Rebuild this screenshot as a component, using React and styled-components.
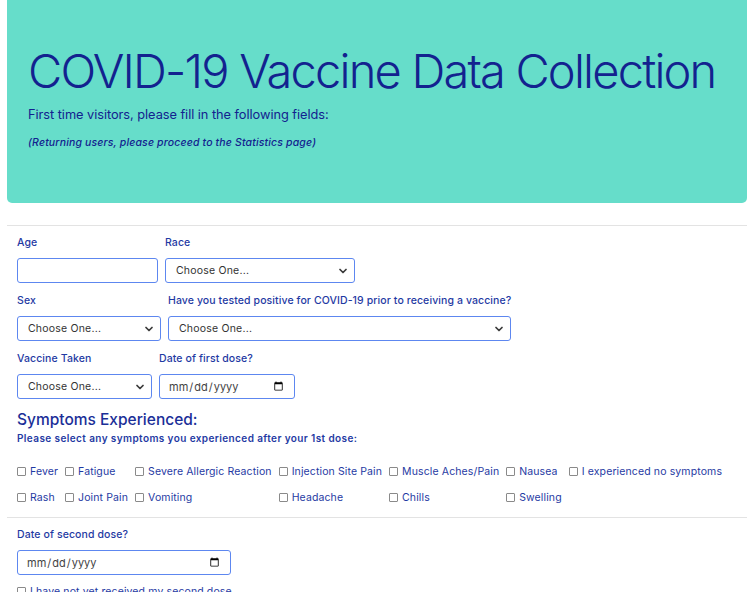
import styled, { createGlobalStyle } from "styled-components";
import { ChevronDown } from "lucide-react";

const GlobalStyle = createGlobalStyle`
  body {
    margin: 0;
    background: #fff;
    font-family: Inter, "Noto Sans", sans-serif;
  }
`;

const symptoms = [
  ["Fever", "Fatigue", "Severe Allergic Reaction", "Injection Site Pain", "Muscle Aches/Pain", "Nausea", "I experienced no symptoms"],
  ["Rash", "Joint Pain", "Vomiting", "Headache", "Chills", "Swelling", null],
];

function Select({ width, options = ["Choose One..."] }) {
  return (
    <SelectWrap $width={width}>
      <SelectBox>
        {options.map((o) => (
          <option key={o}>{o}</option>
        ))}
      </SelectBox>
      <Chevron>
        <ChevronDown size={12} strokeWidth={3.5} color="#3a3a3a" />
      </Chevron>
    </SelectWrap>
  );
}

function App() {
  return (
    <Page>
      <GlobalStyle />
      <Hero>
        <Title>COVID-19 Vaccine Data Collection</Title>
        <Lead>First time visitors, please fill in the following fields:</Lead>
        <Note>(Returning users, please proceed to the Statistics page)</Note>
      </Hero>
      <Rule $top={22} />
      <Form>
        <Row>
          <Field>
            <Label>Age</Label>
            <TextInput $width={141} type="text" />
          </Field>
          <Field>
            <Label>Race</Label>
            <Select width={190} />
          </Field>
        </Row>
        <Row>
          <Field>
            <Label>Sex</Label>
            <Select width={144} />
          </Field>
          <Field>
            <Label>Have you tested positive for COVID-19 prior to receiving a vaccine?</Label>
            <Select width={343} />
          </Field>
        </Row>
        <Row>
          <Field>
            <Label>Vaccine Taken</Label>
            <Select width={135} />
          </Field>
          <Field>
            <Label>Date of first dose?</Label>
            <DateInput $width={136} type="date" />
          </Field>
        </Row>
        <SectionTitle>Symptoms Experienced:</SectionTitle>
        <SectionHint>Please select any symptoms you experienced after your 1st dose:</SectionHint>
        <SymptomGrid>
          {symptoms.flat().map((s, i) =>
            s ? (
              <Check key={s}>
                <Box type="checkbox" />
                {s}
              </Check>
            ) : (
              <span key={"e" + i} />
            )
          )}
        </SymptomGrid>
      </Form>
      <Rule $top={12} />
      <Form>
        <Field>
          <Label>Date of second dose?</Label>
          <DateInput $width={214} type="date" />
        </Field>
        <SecondCheck>
          <Box type="checkbox" />
          I have not yet received my second dose
        </SecondCheck>
      </Form>
    </Page>
  );
}

const Page = styled.main`
  padding: 0 8px 0 7px;
  height: 592px;
  overflow: hidden;
`;

const Hero = styled.header`
  background: #66ddca;
  border-radius: 0 0 5px 5px;
  height: 203px;
  box-sizing: border-box;
  padding: 43px 21px 0;
  color: #13228f;
`;

const Title = styled.h1`
  margin: 0;
  font-size: 47px;
  font-weight: 300;
  letter-spacing: -1.8px;
  line-height: 56px;
  white-space: nowrap;
`;

const Lead = styled.p`
  margin: 7px 0 0;
  font-size: 12.8px;
  font-weight: 400;
  line-height: 17px;
  letter-spacing: -0.05px;
`;

const Note = styled.p`
  margin: 13px 0 0;
  font-size: 10.5px;
  font-style: italic;
  font-weight: 500;
  line-height: 14px;
  letter-spacing: 0.15px;
`;

const Rule = styled.hr`
  margin: ${(p) => p.$top}px 0 0;
  border: 0;
  border-top: 1px solid #e3e3e3;
`;

const Form = styled.section`
  padding: 10px 10px 0;
`;

const Row = styled.div`
  display: flex;
  gap: 7px;
  margin-bottom: 11px;
`;

const Field = styled.div`
  display: flex;
  flex-direction: column;
  align-items: flex-start;
`;

const Label = styled.label`
  font-size: 10.5px;
  font-weight: 500;
  color: #1f3aa3;
  line-height: 14px;
  margin-bottom: 8px;
  letter-spacing: 0.1px;
`;

const controlBase = `
  box-sizing: border-box;
  height: 25px;
  border: 1px solid #5d87f0;
  border-radius: 3px;
  background: #fff;
  font-family: Inter, "Noto Sans", sans-serif;
  font-size: 10.5px;
  color: #333;
  outline: none;
`;

const TextInput = styled.input`
  ${controlBase}
  width: ${(p) => p.$width}px;
  padding: 0 8px;
`;

const DateInput = styled.input`
  ${controlBase}
  width: ${(p) => p.$width}px;
  padding: 0 8px;
  font-size: 11px;
  letter-spacing: 0;
  color: #444;
`;

const SelectWrap = styled.div`
  position: relative;
  width: ${(p) => p.$width}px;
`;

const SelectBox = styled.select`
  ${controlBase}
  width: 100%;
  padding: 0 22px 0 10px;
  appearance: none;
  letter-spacing: 0.2px;
`;

const Chevron = styled.span`
  position: absolute;
  right: 6px;
  top: 7px;
  display: flex;
  pointer-events: none;
`;

const SectionTitle = styled.h2`
  margin: 5px 0 0;
  font-size: 15.5px;
  font-weight: 500;
  color: #1b2f98;
  line-height: 20px;
`;

const SectionHint = styled.p`
  margin: 1px 0 0;
  font-size: 10px;
  font-weight: 600;
  color: #1f3aa3;
  line-height: 14px;
  letter-spacing: 0.4px;
`;

const SymptomGrid = styled.div`
  display: grid;
  grid-template-columns: repeat(7, auto);
  justify-content: start;
  column-gap: 7px;
  row-gap: 12px;
  margin-top: 20px;
`;

const Check = styled.label`
  display: flex;
  align-items: center;
  gap: 4px;
  font-size: 10.5px;
  font-weight: 400;
  color: #1f3aa3;
  line-height: 14px;
  letter-spacing: 0.12px;
  white-space: nowrap;
`;

const Box = styled.input`
  appearance: none;
  margin: 0 0 2px;
  width: 9px;
  height: 9px;
  border: 1px solid #8a8a8a;
  border-radius: 1px;
  background: #fff;
  flex-shrink: 0;
`;

const SecondCheck = styled(Check)`
  margin-top: 10px;
`;

export default App;
